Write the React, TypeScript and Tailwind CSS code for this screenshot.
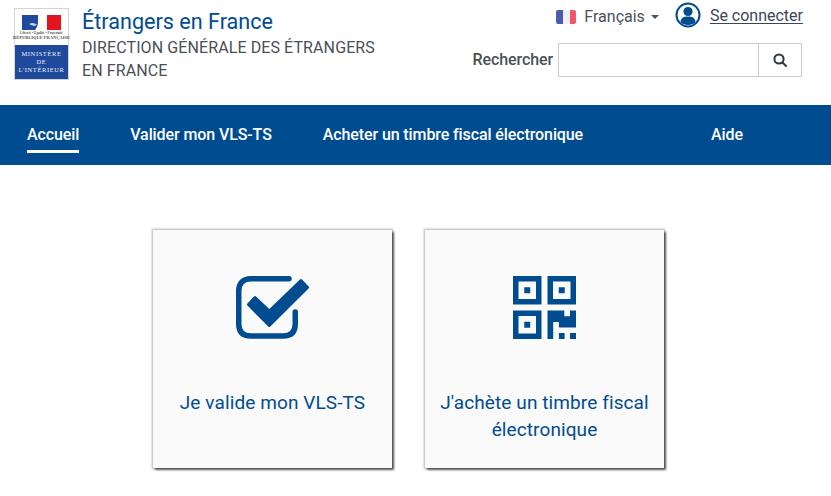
const navItems = [
  { label: 'Accueil', className: 'ml-[27px] border-b-[3px] border-white', active: true },
  { label: 'Valider mon VLS-TS', className: 'ml-[51px]' },
  { label: 'Acheter un timbre fiscal électronique', className: 'ml-[51px]' },
  { label: 'Aide', className: 'ml-[128px]' },
];

const Logo = () => (
  <div className="flex h-[72px] w-[55px] shrink-0 flex-col border border-[#d4d4d4]">
    <div className="flex h-[36px] flex-col items-center bg-white pt-[6px]">
      <svg width="39" height="15" viewBox="0 0 39 15" className="shrink-0">
        <rect width="16" height="15" fill="#1f4a9c" />
        <rect x="16" width="9" height="15" fill="#f4f4f4" />
        <rect x="25" width="14" height="15" fill="#e1141f" />
        <path d="M13 15 C15 12 16 10 16 7 C16 4 18 1 21 0 L25 0 L23 6 C23 10 24 12 25 15 Z" fill="#fff" />
        <path d="M7 9 C10 7 13 8 15 10 L12 11 C10 10 8 10 7 9 Z" fill="#c7d2e6" />
      </svg>
      <div className="mt-px whitespace-nowrap font-['Liberation_Serif',serif] text-[3.5px] font-bold leading-[4px] text-[#555]">
        Liberté • Égalité • Fraternité
      </div>
      <div className="whitespace-nowrap font-['Liberation_Serif',serif] text-[4.5px] font-bold leading-[5px] text-[#555]">
        RÉPUBLIQUE FRANÇAISE
      </div>
    </div>
    <div className="flex flex-1 flex-col items-center justify-center bg-[#1f4a9c] font-['Liberation_Serif',serif] text-[6.5px] leading-[8px] tracking-[0.6px] text-[#eef1f8]">
      <span>MINISTÈRE</span>
      <span>DE</span>
      <span>L'INTÉRIEUR</span>
    </div>
  </div>
);

const CheckIcon = () => (
  <svg width="75" height="64" viewBox="0 0 75 64" fill="none" className="ml-[83px]">
    <path
      d="M53 2.75 H15 C7 2.75 2.75 7 2.75 15 V48 C2.75 56 7 60 15 60 H47 C55 60 59.25 56 59.25 48 V36"
      stroke="#004c91"
      strokeWidth="5.5"
      strokeLinecap="round"
    />
    <path
      d="M12.5 28.5 L19 21.5 L33.3 35 L65 4.5 L71.5 11.5 L33.3 49.5 Z"
      fill="#004c91"
      stroke="#004c91"
      strokeWidth="3"
      strokeLinejoin="round"
    />
  </svg>
);

const QrFinder = ({ x, y }: { x: number; y: number }) => (
  <>
    <rect x={x + 2.75} y={y + 2.75} width="23" height="23" fill="none" stroke="#004c91" strokeWidth="5.5" />
    <rect x={x + 11.25} y={y + 11.25} width="6" height="6" fill="#004c91" />
  </>
);

const QrIcon = () => (
  <svg width="63" height="63" viewBox="0 0 63 63" className="mb-px ml-[88px]">
    <QrFinder x={0} y={0} />
    <QrFinder x={34.5} y={0} />
    <QrFinder x={0} y={34.5} />
    <path
      d="M34.5 34.5 H51.3 V40.2 H57 V34.5 H63 V51.5 H45.9 V46 H40.2 V63 H34.5 Z"
      fill="#004c91"
    />
    <rect x="45.9" y="57" width="5.7" height="6" fill="#004c91" />
    <rect x="57" y="57" width="6" height="6" fill="#004c91" />
  </svg>
);

const Card = ({ children, lines }: { children: React.ReactNode; lines: string[] }) => (
  <a className="flex h-[238px] w-[239px] flex-col bg-[#fafafa] pt-[46px] shadow-[0_0_2px_1px_rgba(0,0,0,0.3),2px_2px_2px_rgba(0,0,0,0.6)]">
    {children}
    <div className="mt-[49px] text-center text-[19px] leading-[27px] tracking-[0.1px] text-[#004c91]">
      {lines.map((line) => (
        <div key={line}>{line}</div>
      ))}
    </div>
  </a>
);

export default function App() {
  return (
    <div className="h-[496px] overflow-hidden bg-white font-['Roboto',sans-serif]">
      <header className="flex h-[105px] pl-[14px] pr-[28px] pt-[8px]">
        <Logo />
        <div className="ml-[13px]">
          <div className="text-[21.6px] leading-[28px] text-[#004c91]">Étrangers en France</div>
          <div className="text-[16px] leading-[23px] tracking-[0.1px] text-[#4a4f57]">
            <div>DIRECTION GÉNÉRALE DES ÉTRANGERS</div>
            <div>EN FRANCE</div>
          </div>
        </div>
        <div className="ml-auto -mt-[8px] flex flex-col items-end">
          <div className="flex h-[32px] items-center pt-[1px] text-[16px] text-[#4a5260]">
            <div className="flex h-[14px] w-[20px] overflow-hidden rounded-[2px]">
              <div className="flex-1 bg-[#4c5bb0]" />
              <div className="flex-1 bg-[#eef0fa]" />
              <div className="flex-1 bg-[#f2566a]" />
            </div>
            <span className="ml-[8px]">Français</span>
            <span className="ml-[6px] h-0 w-0 border-x-[4px] border-t-[4px] border-x-transparent border-t-[#4a5260]" />
            <svg width="26" height="26" viewBox="0 0 26 26" className="ml-[16px] -mt-[3px]">
              <circle cx="13" cy="13" r="11.5" fill="#fff" stroke="#004c91" strokeWidth="2" />
              <circle cx="13" cy="9.5" r="4.6" fill="#004c91" />
              <path d="M5.5 20 C6 15.5 9 14.5 13 14.5 C17 14.5 20 15.5 20.5 20 C18.5 22.3 16 23 13 23 C10 23 7.5 22.3 5.5 20 Z" fill="#004c91" />
            </svg>
            <span className="ml-[9px] -mt-[2px] text-[#3c4656] underline underline-offset-2">Se connecter</span>
          </div>
          <div className="mt-[11px] flex items-center pr-px">
            <span className="text-[16px] font-medium tracking-[-0.1px] text-[#4a4f57]">Rechercher</span>
            <div className="ml-[5px] flex h-[34px] w-[244px] border border-[#cccccc]">
              <div className="flex-1" />
              <div className="flex w-[43px] items-center justify-center border-l border-[#cccccc]">
                <svg width="14" height="14" viewBox="0 0 14 14" fill="none" stroke="#2f3640" strokeWidth="2">
                  <circle cx="6" cy="6" r="4.6" />
                  <path d="M9.5 9.5 L13 13" strokeLinecap="round" />
                </svg>
              </div>
            </div>
          </div>
        </div>
      </header>

      <nav className="flex h-[60px] items-start bg-[#004c91] pt-[19px] text-[16px] font-medium leading-[22px] tracking-[-0.1px] text-white">
        {navItems.map((item) => (
          <a key={item.label} className={`${item.className} ${item.active ? 'pb-[4px]' : ''}`}>
            {item.label}
          </a>
        ))}
      </nav>

      <main className="flex gap-[33px] pl-[153px] pt-[65px]">
        <Card lines={['Je valide mon VLS-TS']}>
          <CheckIcon />
        </Card>
        <Card lines={["J'achète un timbre fiscal", 'électronique']}>
          <QrIcon />
        </Card>
      </main>
    </div>
  );
}
